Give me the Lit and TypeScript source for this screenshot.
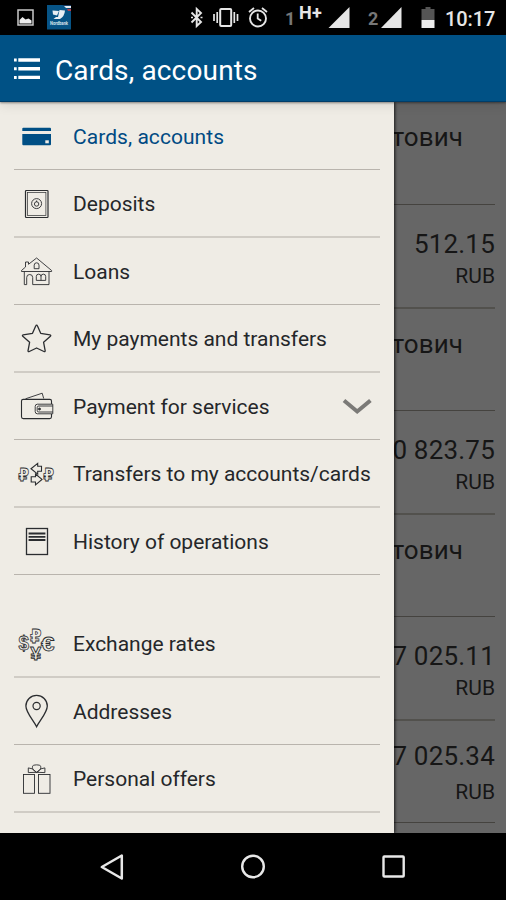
import { LitElement, html, svg, css } from "lit";
import { customElement, property } from "lit/decorators.js";

const INK = "#2b2d30";
const PAPER = "#efece5";

const icons: Record<string, unknown> = {
  card: svg`
    <path d="M9.3 13.8H36a1 1 0 0 1 1 1V17H8.3v-2.2a1 1 0 0 1 1-1Z" fill="#004f85"/>
    <path d="M8.3 20.1H37V30.3a1 1 0 0 1-1 1H9.3a1 1 0 0 1-1-1Z" fill="#004f85"/>
    <rect x="31.3" y="26.3" width="3.5" height="3" fill="${PAPER}"/>`,
  safe: svg`
    <rect x="11.5" y="8.5" width="22.5" height="27" rx=".8" stroke-width="1.2"/>
    <rect x="13.6" y="10.6" width="18.3" height="22.8" stroke-width=".7"/>
    <circle cx="22.6" cy="21.6" r="5"/><circle cx="22.6" cy="22" r="2.2"/>
    <path d="M22.6 18.5V20"/>`,
  house: svg`
    <path d="M7.5 20.5 11.5 17V12h3v2.3L22.6 8l15 12.5v1H7.5Z"/>
    <path d="M10.3 21.5V34.600h2.4V27.5a3 3 0 0 1 6 0v7.1H35V21.5"/>
    <path d="M20.2 18.7V15.2a2.4 2.4 0 0 1 4.8 0v3.5Z"/>
    <path d="M22.3 30.4V26.5a2.3 2.3 0 0 1 4.7 0a2.3 2.3 0 0 1 4.7 0v3.9ZM27 26.5v3.9"/>`,
  star: svg`<path stroke-width="1.3" stroke-linejoin="round" d="M22.6 8.200Q23.2 8.200 23.5 9L26.7 16.3 36 17.8Q37.3 18.3 36.4 19.3L29.6 25.3 31.2 33.8Q31 35 29.9 34.5L22.6 31 15.3 34.5Q14.2 35 14 33.8L15.6 25.3 8.800 19.3Q7.9 18.3 9.200 17.8L18.5 16.3 21.7 9Q22 8.200 22.6 8.200Z"/>`,
  wallet: svg`
    <path stroke-width="1.1" d="M37.5 19V16q0-1.600-1.600-1.600H9.200q-1.700 0-1.700 1.700v15.700q0 1.800 1.800 1.800H35.700q1.800 0 1.800-1.800V29"/>
    <path d="M38.8 19.2H23.4q-2.2 0-2.2 2.2v5.2q0 2.2 2.2 2.2H38.8ZM38.8 21H24.8q-1.600 0-1.600 1.600v2.8q0 1.600 1.600 1.600h14"/>
    <circle cx="25.5" cy="24" r="1" fill="${INK}"/>
    <path d="M11.5 13.8 28.2 8.200 29.7 13.5"/>`,
  transfer: svg`
    <text x="4.300" y="28.8" font-size="18.5" textLength="10.8" lengthAdjust="spacingAndGlyphs">₽</text>
    <text x="29.300" y="28.8" font-size="18.5" textLength="10.8" lengthAdjust="spacingAndGlyphs">₽</text>
    <path stroke-width="1.1" d="M17 16.700 23.7 11.300V14.200H27.500V19.300H23.7V22.200Z"/>
    <path stroke-width="1.1" d="M28 27.400 21.500 22V24.800H17.200V30H21.500V32.800Z"/>`,
  history: svg`
    <rect x="12.5" y="8.500" width="21" height="26" stroke-width="1.3"/>
    <path stroke-width="1.8" d="M14.600 13.500H31.400M14.600 16.800H31.400M14.600 20H31.400"/>`,
  rates: svg`
    <text x="27" y="28.600" font-size="20" textLength="13.5" lengthAdjust="spacingAndGlyphs">€</text>
    <text x="4.500" y="28" font-size="20" textLength="10.5" lengthAdjust="spacingAndGlyphs">$</text>
    <text x="16.300" y="37.800" font-size="18" textLength="11" lengthAdjust="spacingAndGlyphs">¥</text>
    <text x="16" y="20.800" font-size="20" textLength="11.5" lengthAdjust="spacingAndGlyphs">₽</text>`,
  pin: svg`
    <path stroke-width="1.3" d="M22.600 36.800C19.500 30.500 11.900 22.500 11.900 16a10.700 10.700 0 0 1 21.400 0C33.300 22.500 25.700 30.500 22.600 36.800Z"/>
    <circle cx="22.600" cy="16" r="3.600" stroke-width="1.2"/>`,
  gift: svg`
    <rect x="9.500" y="17.500" width="11" height="18.800"/><rect x="24.500" y="17.500" width="11.500" height="18.800"/>
    <path d="M22.600 15.500C19 13.500 17 10 19.500 8.200Q22.600 7.500 25.700 8.200C28.200 10 26.200 13.500 22.600 15.500Z"/>
    <path d="M18.200 11.800 14.300 10.900V15.600L22.600 15.300 18.200 11.800M27 11.800 30.900 10.900V15.600L22.600 15.300 27 11.800"/>`,
};

@customElement("menu-row")
class MenuRow extends LitElement {
  @property() icon = "";
  @property() label = "";
  @property({ type: Boolean }) active = false;
  @property({ type: Boolean }) expandable = false;

  static styles = css`
    :host { display: flex; box-sizing: border-box; height: 67px; border-bottom: 1px solid #b9b4ad; color: #25272a; }
    :host([soft]) { height: 68px; border-bottom: 2px solid #d0ccc5; }
    :host([first]) { height: 68px; }
    :host([active]) { color: #004a83; }
    .icon { width: 44px; height: 44px; margin-top: 12px; flex: none; fill: none; stroke: #2b2d30; stroke-width: .9; }
    .icon text { font-family: "Liberation Sans", "DejaVu Sans", sans-serif; font-weight: 700; stroke-width: .8; fill: #efece5; }
    :host([active]) .icon { stroke: none; }
    .label { flex: 1; margin: 12px 0 0 15px; font-size: 21px; line-height: 44px; white-space: nowrap; letter-spacing: -.01px; }
    :host([active]) .label { margin-top: 13px; letter-spacing: .05px; }
    .chevron { width: 30px; height: 18px; margin: 25px 8px 0 0; flex: none; fill: none; stroke: #7b7a77; stroke-width: 4; }
  `;

  render() {
    return html`
      <svg class="icon" viewBox="0 0 44 44">${icons[this.icon]}</svg>
      <span class="label">${this.label}</span>
      ${this.expandable
        ? html`<svg class="chevron" viewBox="0 0 30 18"><path d="M2 2.5 15.2 13.5 28.4 2.5"/></svg>`
        : null}
    `;
  }
}

@customElement("app-root")
class AppRoot extends LitElement {
  static styles = css`
    :host { display: flex; flex-direction: column; width: 506px; height: 900px; overflow: hidden; background: #000; font-family: Roboto, sans-serif; }
    svg { display: block; flex: none; }
    .status { height: 35px; flex: none; display: flex; background: #000; color: #e6e6e6; line-height: 36px; white-space: nowrap; }
    .shot { margin-left: 17px; }
    .bank { margin-left: 13px; }
    .bank text { font-weight: 700; }
    .bt { margin-left: 119px; }
    .vibrate { margin-left: 10px; }
    .alarm { margin-left: 9px; }
    .sim { width: 11px; color: #777; font-size: 18px; font-weight: 700; line-height: 38px; }
    .sim1 { margin-left: 16px; }
    .sim2 { margin-left: 18px; }
    .net { width: 29px; margin-left: 3px; font-size: 18px; font-weight: 700; line-height: 26px; letter-spacing: .3px; }
    .signal { fill: #e6e6e6; }
    .sig2 { margin-left: 2px; }
    .battery { margin-left: 19px; }
    .time { margin-left: 10px; font-size: 20px; font-weight: 500; line-height: 38px; letter-spacing: -.1px; }
    .bar { position: relative; z-index: 2; height: 67px; box-sizing: border-box; flex: none; display: flex; align-items: center; padding-left: 14px; background: #005185; border-bottom: 1px solid #003d69; box-shadow: 0 1px 2px rgba(0,0,0,.4), 0 2px 12px rgba(0,0,0,.12); color: #fff; }
    .burger { margin-top: 1px; fill: #fff; }
    .title { margin: 5px 0 0 15px; font-size: 28px; line-height: 40px; font-weight: 400; white-space: nowrap; letter-spacing: .15px; }
    .body { position: relative; height: 731px; flex: none; background: #666; overflow: hidden; }
    .drawer { position: absolute; inset: 0 auto 0 0; width: 394px; box-sizing: border-box; padding: 0 14px; background: #efece5; box-shadow: 1px 0 3px rgba(0,0,0,.75); }
    .gap { height: 35px; }
    .accounts { margin-right: 11px; color: #161616; text-align: right; white-space: nowrap; }
    .entry { box-sizing: border-box; height: 102px; border-bottom: 1px solid #45433f; display: flex; flex-direction: column; }
    .entry.top { height: 103px; }
    .entry.wide { border-bottom: 2px solid #52514d; height: 104px; }
    .owner { margin: 15px 32px 0 0; font-size: 26px; line-height: 40px; letter-spacing: .1px; }
    .amount { margin-top: 21px; font-size: 26px; line-height: 36px; letter-spacing: .2px; }
    .currency { font-size: 21px; line-height: 28px; }
    .last .amount { margin-top: 17px; }
    .last .currency { margin-top: 4px; }
    .nav { height: 67px; flex: none; display: flex; align-items: center; padding-left: 99px; background: #000; fill: none; stroke: #e8e8e8; }
    .home { margin-left: 116px; }
    .recent { margin-left: 115px; }
  `;

  private owner(kind = "") {
    return html`<div class="entry ${kind}"><div class="owner">тович</div></div>`;
  }

  private account(amount: string, kind: string) {
    return html`<div class="entry ${kind}">
      <div class="amount">${amount}</div>
      <div class="currency">RUB</div>
    </div>`;
  }

  render() {
    return html`
      <div class="status">
        <svg class="shot" width="17" height="35"><rect x="1" y="10" width="15" height="15" fill="none" stroke="#c9c9c9" stroke-width="1.5"/><path d="M2.5 23.5V20l3-3 3 2.5 3-1 3 2v3Z" fill="#eee"/></svg>
        <svg class="bank" width="24" height="35"><rect y="5" width="24" height="24.5" fill="#075486"/><path d="M15 5h9v7q-4-5-9-7Z" fill="#163b63"/><path d="M17 6h7v2h-5Z" fill="#e5e9f0"/><path d="M20 9h4v2h-3Z" fill="#b33f4b"/><path d="M5.5 10.500 12 11l-2 4.500-4-1ZM12.500 10 18 10.500q-.5 6-5 8.500H6.500l2.500-2h2Z" fill="#e8eef3"/><text x="3" y="25" font-size="4.5" textLength="18" lengthAdjust="spacingAndGlyphs" fill="#dce5ec">Nordbank</text></svg>
        <svg class="bt" width="13" height="35" fill="none" stroke="#e6e6e6" stroke-width="1.9"><path d="M1.5 12.5 11 22 6.700 26V9L11 13 1.5 22.500"/><path d="M10.500 17.500h2M1 17.500h2" stroke-width="1.5"/></svg>
        <svg class="vibrate" width="26" height="35" fill="none" stroke="#e6e6e6"><rect x="7.200" y="9" width="11" height="17" rx="1" stroke-width="2"/><path d="M1 14v7M4.200 12v11M21.300 12v11M24.500 14v7" stroke-width="1.7"/></svg>
        <svg class="alarm" width="21" height="35" fill="none" stroke="#e6e6e6"><circle cx="10" cy="18.500" r="8" stroke-width="1.9"/><path d="M9.700 13.500V18.500l3.500 2.300M1 12l5-4M19 12l-5-4" stroke-width="1.8"/></svg>
        <span class="sim sim1">1</span>
        <span class="net">H+</span>
        <svg class="signal" width="22" height="35"><path d="M.5 28 21.500 7V28Z"/></svg>
        <span class="sim sim2">2</span>
        <svg class="signal sig2" width="21" height="35"><path d="M0 28 20.500 7V28Z"/></svg>
        <svg class="battery" width="14" height="35"><path d="M4.500 7h5v2H13.500v11H.5V9H4.500Z" fill="#555"/><rect x=".5" y="20" width="13" height="8" fill="#eee"/></svg>
        <span class="time">10:17</span>
      </div>
      <div class="bar">
        <svg class="burger" width="26" height="24"><path d="M0 1.500h2.700v3H0ZM0 10.300h2.700v3H0ZM0 19h2.700v3H0ZM4.300 1.300H26v3.400H4.300ZM4.300 10H26v3.400H4.300ZM4.300 18.700H26v3.400H4.300Z"/></svg>
        <div class="title">Cards, accounts</div>
      </div>
      <div class="body">
        <div class="accounts">
          ${this.owner("top")} ${this.account("512.15", "wide")}
          ${this.owner()} ${this.account("0 823.75", "wide")}
          ${this.owner()} ${this.account("7 025.11", "wide")}
          ${this.account("7 025.34", "last")}
        </div>
        <nav class="drawer">
          <menu-row first active icon="card" label="Cards, accounts"></menu-row>
          <menu-row soft icon="safe" label="Deposits"></menu-row>
          <menu-row icon="house" label="Loans"></menu-row>
          <menu-row soft icon="star" label="My payments and transfers"></menu-row>
          <menu-row expandable icon="wallet" label="Payment for services"></menu-row>
          <menu-row soft icon="transfer" label="Transfers to my accounts/cards"></menu-row>
          <menu-row icon="history" label="History of operations"></menu-row>
          <div class="gap"></div>
          <menu-row soft icon="rates" label="Exchange rates"></menu-row>
          <menu-row icon="pin" label="Addresses"></menu-row>
          <menu-row soft icon="gift" label="Personal offers"></menu-row>
        </nav>
      </div>
      <div class="nav">
        <svg width="26" height="30"><path d="M2.800 15 22.800 3.500V26.500Z" stroke-width="2.5" stroke-linejoin="round"/></svg>
        <svg class="home" width="26" height="30"><circle cx="12" cy="14.500" r="10.800" stroke-width="2.4"/></svg>
        <svg class="recent" width="26" height="30"><rect x="1.500" y="4.500" width="20.200" height="20" rx=".8" stroke-width="2.4"/></svg>
      </div>
    `;
  }
}
